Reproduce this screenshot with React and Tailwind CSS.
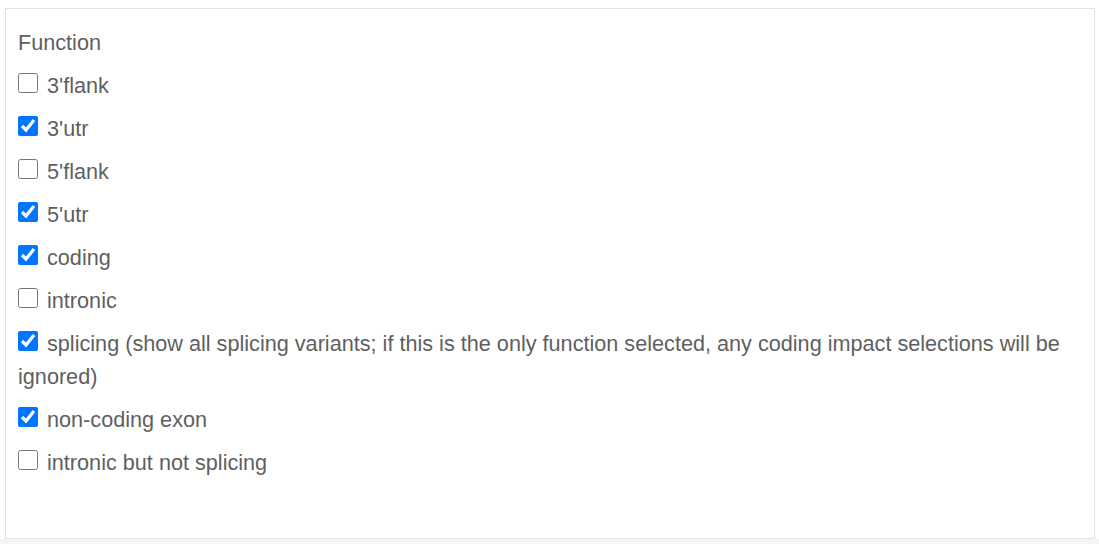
import { useState } from 'react';

const OPTIONS = [
  { key: '3flank', label: "3'flank", checked: false },
  { key: '3utr', label: "3'utr", checked: true },
  { key: '5flank', label: "5'flank", checked: false },
  { key: '5utr', label: "5'utr", checked: true },
  { key: 'coding', label: 'coding', checked: true },
  { key: 'intronic', label: 'intronic', checked: false },
  {
    key: 'splicing',
    label:
      'splicing (show all splicing variants; if this is the only function selected, any coding impact selections will be ignored)',
    checked: true,
  },
  { key: 'noncoding', label: 'non-coding exon', checked: true },
  { key: 'intronicNotSplicing', label: 'intronic but not splicing', checked: false },
];

export default function App() {
  const [values, setValues] = useState(() =>
    Object.fromEntries(OPTIONS.map((o) => [o.key, o.checked]))
  );

  const toggle = (key) => setValues((v) => ({ ...v, [key]: !v[key] }));

  return (
    <div className="w-[1099px] h-[544px] bg-white font-['Liberation_Sans',Arial,sans-serif] text-[21.65px] text-[#5f5f5f]">
      <div className="pt-2 pl-[5px] pr-[4px]">
        {/* Function filter panel */}
        <div className="h-[531px] border border-[#e3e3e3] bg-white pt-[17px] pl-3 pr-3">
          <div className="leading-[33px]">Function</div>
          {OPTIONS.map((o) => (
            <label key={o.key} className="block mt-[10px] leading-[33px]">
              <input
                type="checkbox"
                checked={values[o.key]}
                onChange={() => toggle(o.key)}
                className="w-[20px] h-[20px] m-0 mr-[3px] align-baseline"
              />{' '}
              {o.label}
            </label>
          ))}
        </div>
      </div>
      <div className="h-[5px] bg-[#f5f5f5]"></div>
    </div>
  );
}
